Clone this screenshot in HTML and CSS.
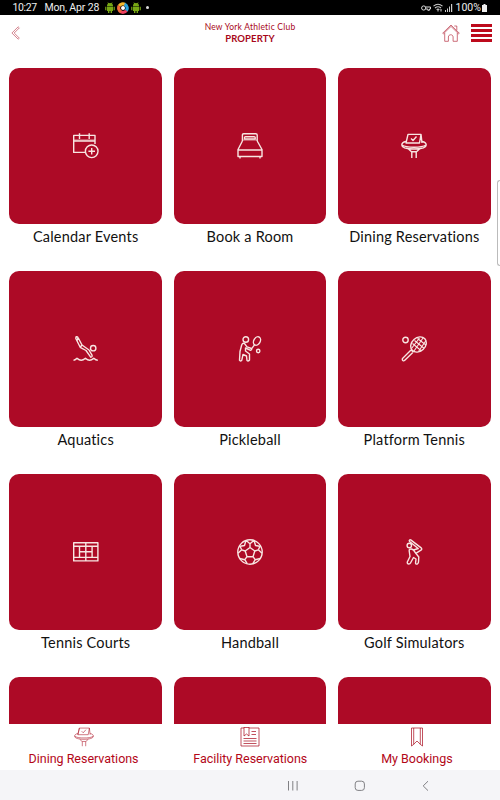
FILE: index.html
```html
<!DOCTYPE html>
<html lang="en">
<head>
    <meta charset="UTF-8">
    <meta name="viewport" content="width=device-width, initial-scale=1.0">
    <title>New York Athletic Club - Property</title>
    <link rel="stylesheet" href="styles.css">
</head>
<body>
    <svg class="sprite" width="0" height="0">
        <symbol id="dining" viewBox="0 0 26 26">
            <path d="M5 10 7 1.4H20l1 8.6M7 1.4 5 10H18.500L20 1.4M10 5.500l2 2 3.500-4"/>
            <path d="M5 8.500C2 9 .8 10.500.8 12c0 2.500 5.200 4 12.200 4s12.200-1.500 12.200-4c0-1.500-1.200-3-4.200-3.500M1 12c3 2 7 2.200 12 2.200S22 14 25 12M7.500 16l3 2.800h5l3-2.800M10.800 19v6M15.200 19v6"/>
        </symbol>
        <symbol id="android" viewBox="0 0 10 12">
            <path d="M2 4a3 3 0 0 1 6 0zM2 4.500h6V9H2zM.200 4.800h1.200v3.500H.200zM8.600 4.800h1.200v3.500H8.600zM3 9h1.400v2H3zM5.600 9H7v2H5.600zM2.500.500l.500-.300L4 2l-.5.3zM7.500.500 7 .200 6 2l.5.3z"/>
        </symbol>
    </svg>

    <div class="status-bar">
        <span class="status-time">10:27</span>
        <span class="status-date">Mon, Apr 28</span>
        <svg class="android" width="10" height="12"><use href="#android"/></svg>
        <svg class="swirl" width="12" height="12" viewBox="0 0 12 12" fill="none" stroke-width="3.200">
            <path stroke="#f5b82e" d="M2.200 4A4.200 4.200 0 0 1 8 2.400"/>
            <path stroke="#2ba3dc" d="M7.500 2.200A4.200 4.200 0 0 1 9.200 8.800"/>
            <path stroke="#ee3f60" d="M9.300 8.600A4.200 4.200 0 0 1 3.500 9.500"/>
            <path stroke="#f06a3a" d="M4 9.700A4.200 4.200 0 0 1 2.200 3.900"/>
            <circle cx="6" cy="6" r="2" fill="#fff" stroke="none"/>
        </svg>
        <svg class="android" width="10" height="12"><use href="#android"/></svg>
        <span class="dot"></span>
        <div class="status-right">
            <svg width="10" height="8" viewBox="0 0 10 8" fill="none" stroke="#ddd" stroke-width="1"><circle cx="2.700" cy="4" r="2.100"/><path d="M4.800 3h4.700v2H8.400v1.300H6.800V5h-2"/></svg>
            <svg width="10" height="9" viewBox="0 0 10 9" fill="none" stroke="#ccc" stroke-width="1.100"><path d="M.500 3.200Q5-.800 9.500 3.200M2 5Q5 2.400 8 5M3.600 6.700Q5 5.500 6.400 6.700"/><path d="M5 6.500V8.500M8 6v2.500"/></svg>
            <svg width="8" height="8" viewBox="0 0 8 8" fill="#ccc"><path d="M0 6h1v2H0zM2 4.500h1V8H2zM4 2.500h1V8H4zM6 0h1.200v8H6z"/></svg>
            <span class="battery-text">100%</span>
            <svg width="5" height="8" viewBox="0 0 5 8" fill="#eee"><path d="M1.500 0h2v1H5v7H0V1h1.500z"/></svg>
        </div>
    </div>

    <header class="header">
        <svg class="back" width="10" height="14" viewBox="0 0 10 14"><path d="M7.200.800 8.300 1.900 3.200 7l5.100 5.100-1.100 1.100L.900 7z"/></svg>
        <div class="title">
            <div class="club">New York Athletic Club</div>
            <div class="page">PROPERTY</div>
        </div>
        <div class="header-actions">
            <svg class="home" width="18" height="18" viewBox="0 0 18 18"><path d="M.700 9.200 9 1l8.300 8.200-.700.600M.700 9.200l.700.600L9 2.400l7.600 7.400M2.700 9v8.300h3.700V13c0-3 4.700-3 4.700 0v4.300h4.200V9M12.300 2h2.500v4.300"/></svg>
            <div class="menu">
                <span></span>
                <span></span>
                <span></span>
                <span></span>
            </div>
        </div>
    </header>

    <main class="grid">
        <div class="item">
            <div class="card">
                <svg class="icon" viewBox="0 0 26 26"><path d="M22 11V2.400H.700v17H12M.700 8H22M6.500.300V6M16.200.300V6"/><path class="faint" d="M1 7h21"/><circle cx="18.700" cy="18.300" r="6.300"/><path d="M18.700 15v6.600M15.400 18.300H22"/></svg>
            </div>
            <div class="label">Calendar Events</div>
        </div>
        <div class="item">
            <div class="card">
                <svg class="icon" viewBox="0 0 26 26"><path d="M5.400 8V2Q5.400.700 6.700.700h12Q20.200.700 20.200 2v6M7.500 6V4.500Q7.500 3.700 8.500 3.700h8.700q1 0 1 .8V6zM5.400 8 1 16.500v7h24v-7L20.200 8M1 17h24M3 24v1.500M23 24v1.500"/><path class="faint" d="M6 7h14"/></svg>
            </div>
            <div class="label">Book a Room</div>
        </div>
        <div class="item">
            <div class="card">
                <svg class="icon"><use href="#dining"/></svg>
            </div>
            <div class="label">Dining Reservations</div>
        </div>
        <div class="item">
            <div class="card">
                <svg class="icon" viewBox="0 0 26 26"><path d="M3 .800Q4.500.300 5.300 2L9 9l7 5 3 5.200q.5 2-1.300 2L13 14.500 7.200 11.300 2.800 2.500zM5 1.800l-1 3M9 9l-1.800 2.300"/><circle cx="20.200" cy="12.200" r="2.700"/><path d="M.500 24.300Q2 24.300 4 22.300q2.200 2 4.200 2t4.200-2q2.200 2 4.200 2t4.200-2q2 2 4 2"/></svg>
            </div>
            <div class="label">Aquatics</div>
        </div>
        <div class="item">
            <div class="card">
                <svg class="icon" viewBox="0 0 26 26"><circle cx="8.800" cy="3.500" r="2.800"/><ellipse cx="20" cy="5" rx="3.200" ry="4.500" transform="rotate(30 20 5)"/><path d="m17.500 8.800-3 4M14.500 12.500 10 10.800 7.500 7.500Q5.500 6.800 4.700 9L3 15.500l-.500 8.700q.8 1.500 2.300 0L6 18.500l3.500 1.500.5 4.500q1.200 1 2.500-.5V18L8.500 15V12l5 2.300q1.500-.3 1-1.800"/><circle cx="21.200" cy="15" r="1.700"/></svg>
            </div>
            <div class="label">Pickleball</div>
        </div>
        <div class="item">
            <div class="card">
                <svg class="icon" viewBox="0 0 26 26"><circle cx="4.500" cy="4" r="2.700"/><ellipse cx="17.500" cy="8.500" rx="8.500" ry="6.800" transform="rotate(-42 17.500 8.500)"/><path d="m10 14-8.500 8.500q-.5 1.200.3 2 1 .8 2-.2L12.300 16M10 14l2.300 2"/><path class="mesh" d="m11.500 7.500 9 7.500M13.500 4.500l9.500 7.800M16.500 2.500l8.500 6.500M13 15 22 2M17.500 15.500l7.500-11M10.500 12.500l8-10.500"/></svg>
            </div>
            <div class="label">Platform Tennis</div>
        </div>
        <div class="item">
            <div class="card">
                <svg class="icon" viewBox="0 0 26 26"><path d="M.700 3.700h24.200v18.200H.700zM.700 7.200h24.200M.700 18.400h24.200M6.500 7.200v11.200M19.100 7.200v11.200M12.800 3.700v18.200M6.500 12.800h12.600"/></svg>
            </div>
            <div class="label">Tennis Courts</div>
        </div>
        <div class="item">
            <div class="card">
                <svg class="icon" viewBox="0 0 26 26"><circle cx="13" cy="13" r="12.200"/><path d="m13 8.500 4.800 3.500-1.800 5.700h-6L8.200 12zM13 8.500V5M9.200 1.500 13 4.800l3.800-3.300M17.800 12l3.500-1.200M24 7.500l-5.500-1L17 1.300M21.300 10.800l2-4M21.300 10.800l3.700 3.400M16 17.700l2.200 3M23.200 19.500l-5 1.200-2.500 4.200M10 17.700l-2.200 3M2.800 19.500l5 1.200 2.500 4.200M8.200 12l-3.500-1.200M2 7.500l5.500-1L9 1.300M4.700 10.800l-2-4M4.700 10.800 1 14.200"/></svg>
            </div>
            <div class="label">Handball</div>
        </div>
        <div class="item">
            <div class="card">
                <svg class="icon" viewBox="0 0 26 26"><circle cx="8.300" cy="6.500" r="2.200"/><path d="M8.200 2.200Q8.200.500 9.700.900l10.500 8q1.200 1.300-.2 2.300l-5.200 3.100M8.200 2.200l9 7.300-4.700 1.500L10.500 10Q8 9.700 8.200 12l.8 5.500L6.300 23q-.2 2 1.500 2 1.200 0 1.700-1l3-5.500 2.500 1.500-.5 4q.5 1.800 2 .8 1-.8 1-1.800l.3-5-3-3.700L12.500 11"/></svg>
            </div>
            <div class="label">Golf Simulators</div>
        </div>
        <div class="item"><div class="card"></div></div>
        <div class="item"><div class="card"></div></div>
        <div class="item"><div class="card"></div></div>
    </main>

    <nav class="tabs">
        <div class="tab">
            <svg width="20" height="20"><use href="#dining"/></svg>
            <span>Dining Reservations</span>
        </div>
        <div class="tab">
            <svg width="20" height="20" viewBox="0 0 20 20"><path d="M1 1h3v-.500h5V1h10v18H1zM4 .500V9l2.500-2L9 9V.500M11.500 4.500H16M11.500 7.500H16M3.500 11.500h13M3.500 14h13M3.500 16.500h13"/></svg>
            <span>Facility Reservations</span>
        </div>
        <div class="tab">
            <svg width="20" height="20" viewBox="0 0 20 20"><path d="M4.500 1h11v18l-2-1.500L10 14l-3.500 3.500-2 1.500zM6.700 1v16.500M13.300 1v16.500"/></svg>
            <span>My Bookings</span>
        </div>
    </nav>

    <footer class="system-nav">
        <svg width="12" height="12" viewBox="0 0 12 12"><path d="M1.500 1v9.500M5.800 1v9.500M10.100 1v9.500"/></svg>
        <svg width="12" height="12" viewBox="0 0 12 12"><rect x="1.200" y="1.200" width="9.200" height="9.200" rx="2.700"/></svg>
        <svg width="12" height="12" viewBox="0 0 12 12"><path d="M8 1.200 3.200 5.900 8 10.600"/></svg>
    </footer>

    <div class="edge-handle"></div>
</body>
</html>
```

FILE: styles.css
```css
:root {
    --red: #ad0a26;
    --dark-red: #a8071a;
    --nav-red: #b30718;
}

* {
    margin: 0;
    padding: 0;
    box-sizing: border-box;
}

body {
    font-family: 'Lato', sans-serif;
    background: #fff;
    color: #111;
    height: 100vh;
    display: flex;
    flex-direction: column;
    overflow: hidden;
}

svg {
    display: block;
    flex: none;
}

.sprite {
    position: absolute;
}

/* Status bar */
.status-bar {
    height: 15px;
    flex: none;
    background: #000;
    color: #eee;
    display: flex;
    align-items: center;
    padding: 0 13px 0 12.5px;
    font-family: 'Roboto', sans-serif;
    font-size: 10.5px;
    line-height: 15px;
}

.status-time {
    width: 32px;
    letter-spacing: -0.35px;
}

.status-date {
    width: 60.5px;
    letter-spacing: -0.15px;
    white-space: nowrap;
}

.android {
    fill: #78a914;
}

.swirl {
    margin: 0 2px;
}

.dot {
    width: 3px;
    height: 3px;
    margin-left: 5px;
    border-radius: 50%;
    background: #ddd;
}

.status-right {
    margin-left: auto;
    display: flex;
    align-items: center;
    gap: 2px;
}

.battery-text {
    margin-left: 1px;
    width: 24.5px;
}

/* Header */
.header {
    height: 53px;
    flex: none;
    display: grid;
    grid-template-columns: 1fr auto 1fr;
    padding: 7px 8px 0 11px;
    color: var(--dark-red);
}

.back {
    margin-top: 4px;
    fill: none;
    stroke: #c2505f;
    stroke-width: 0.7;
}

.title {
    text-align: center;
    padding-right: 3px;
}

.club {
    font-size: 8.5px;
    line-height: 11px;
    letter-spacing: 0.22px;
}

.page {
    font-size: 9.5px;
    line-height: 11px;
    font-weight: 700;
    letter-spacing: 0.1px;
}

.header-actions {
    display: flex;
    justify-content: flex-end;
    gap: 11px;
    align-items: flex-start;
}

.home {
    margin-top: 2px;
    fill: none;
    stroke: #b83445;
    stroke-width: 0.7;
}

.menu {
    width: 21px;
    margin-top: 2px;
    display: flex;
    flex-direction: column;
    gap: 2px;
}

.menu span {
    height: 3px;
    background: #bd0a1c;
}

/* Cards */
.grid {
    flex: 1;
    min-height: 0;
    overflow: hidden;
    display: grid;
    grid-template-columns: repeat(3, 1fr);
    grid-auto-rows: 203px;
    column-gap: 11.5px;
    padding: 0 9.3px;
}

.card {
    height: 156px;
    border-radius: 10px;
    background: var(--red);
    display: flex;
    align-items: center;
    justify-content: center;
}

.icon {
    width: 26px;
    height: 26px;
    fill: none;
    stroke: #f8e6e2;
    stroke-width: 1.4;
    stroke-linejoin: round;
}

.faint {
    opacity: 0.5;
}

.mesh {
    stroke-width: 1.1;
}

.label {
    text-align: center;
    font-size: 14.5px;
    line-height: 26px;
    letter-spacing: 0.2px;
    white-space: nowrap;
}

/* Bottom tabs */
.tabs {
    height: 46px;
    flex: none;
    display: grid;
    grid-template-columns: repeat(3, 1fr);
    background: #fff;
    color: var(--nav-red);
    font-family: 'Roboto', sans-serif;
    font-size: 12.5px;
    letter-spacing: -0.02px;
}

.tab {
    display: flex;
    flex-direction: column;
    align-items: center;
    padding: 3px 0 0 0.5px;
    line-height: 24px;
    white-space: nowrap;
}

.tab svg {
    fill: none;
    stroke: var(--dark-red);
    stroke-width: 0.7;
}

/* System navigation */
.system-nav {
    height: 30px;
    flex: none;
    background: #f5f5f8;
    display: flex;
    align-items: center;
    justify-content: flex-end;
    gap: 54.500px;
    padding: 1px 68px 0 0;
}

.system-nav svg {
    fill: none;
    stroke: #808084;
    stroke-width: 1;
}

/* Edge panel handle lies over the page */
.edge-handle {
    position: absolute;
    top: 180px;
    right: 0;
    width: 3px;
    height: 86px;
    border: 1px solid #bbb;
    border-right: 0;
    border-radius: 3px 0 0 3px;
    background: #fff;
}
```
